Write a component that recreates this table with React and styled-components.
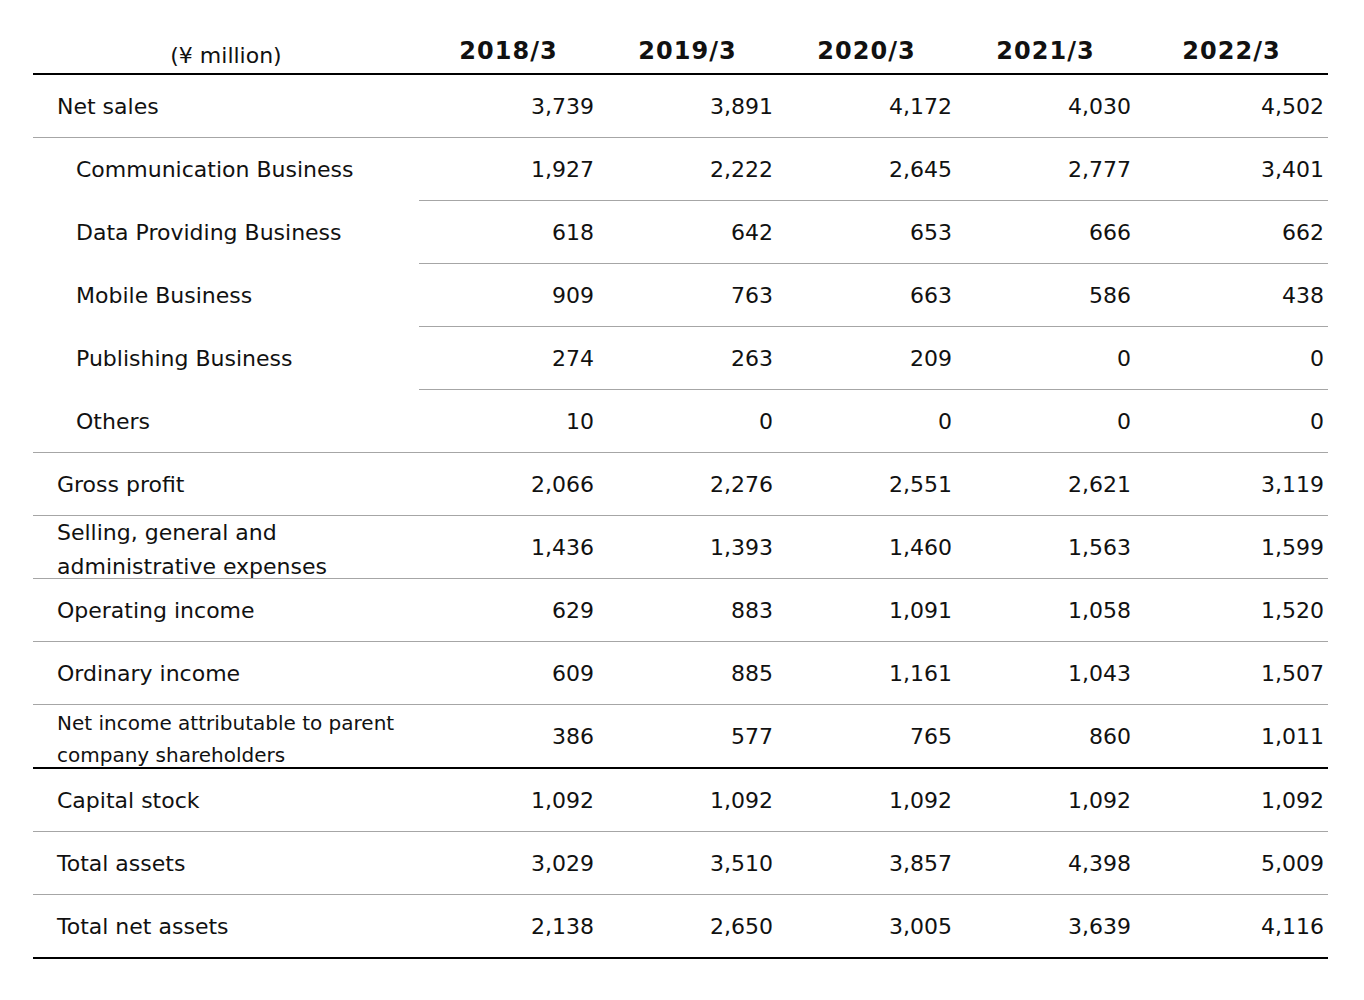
import React from "react";
import styled, { createGlobalStyle } from "styled-components";

const GlobalStyle = createGlobalStyle`
  body {
    margin: 0;
    background: #fff;
    font-family: Verdana, "DejaVu Sans", sans-serif;
    color: #111;
  }
`;

const Wrapper = styled.div`
  padding: 20px 36px 0 33px;
`;

const Table = styled.table`
  width: 1295px;
  border-collapse: collapse;
  table-layout: fixed;
  font-size: 22px;
  border-bottom: 2px solid #000;
`;

const HeadCell = styled.th`
  height: ${({ $unit }) => ($unit ? "35px" : "45px")};
  padding: ${({ $unit }) => ($unit ? "18px 0 0" : "8px 0 0")};
  text-align: center;
  vertical-align: middle;
  font-weight: ${({ $unit }) => ($unit ? "normal" : "bold")};
  font-size: ${({ $unit }) => ($unit ? "22px" : "24px")};
  letter-spacing: ${({ $unit }) => ($unit ? "0" : "1px")};
  border-bottom: 2px solid #000;
`;

const Row = styled.tr`
  height: 63px;
  border-bottom: ${({ $line }) =>
    $line === "strong" ? "2px solid #000" : $line === "none" ? "0" : "1px solid #a6a6a6"};
`;

const Label = styled.td`
  padding: 0 0 0 ${({ $sub }) => ($sub ? "43px" : "24px")};
  vertical-align: middle;
  white-space: nowrap;
`;

const LabelText = styled.div`
  box-sizing: border-box;
  height: 62px;
  display: flex;
  flex-direction: column;
  justify-content: center;
  padding-top: ${({ $multi }) => ($multi ? "5px" : "2px")};
  line-height: ${({ $small }) => ($small ? "32px" : "34px")};
  font-size: ${({ $small }) => ($small ? "20px" : "22px")};
`;

const Value = styled.td`
  padding: 0 4px 0 0;
  text-align: right;
  vertical-align: middle;
  border-bottom: ${({ $subLine }) => ($subLine ? "1px solid #a6a6a6" : "inherit")};
`;

const years = ["2018/3", "2019/3", "2020/3", "2021/3", "2022/3"];

const rows = [
  { label: "Net sales", values: ["3,739", "3,891", "4,172", "4,030", "4,502"] },
  { label: "Communication Business", sub: true, subLine: true, values: ["1,927", "2,222", "2,645", "2,777", "3,401"] },
  { label: "Data Providing Business", sub: true, subLine: true, values: ["618", "642", "653", "666", "662"] },
  { label: "Mobile Business", sub: true, subLine: true, values: ["909", "763", "663", "586", "438"] },
  { label: "Publishing Business", sub: true, subLine: true, values: ["274", "263", "209", "0", "0"] },
  { label: "Others", sub: true, values: ["10", "0", "0", "0", "0"] },
  { label: "Gross profit", values: ["2,066", "2,276", "2,551", "2,621", "3,119"] },
  { label: ["Selling, general and", "administrative expenses"], values: ["1,436", "1,393", "1,460", "1,563", "1,599"] },
  { label: "Operating income", values: ["629", "883", "1,091", "1,058", "1,520"] },
  { label: "Ordinary income", values: ["609", "885", "1,161", "1,043", "1,507"] },
  { label: ["Net income attributable to parent", "company shareholders"], small: true, line: "strong", values: ["386", "577", "765", "860", "1,011"] },
  { label: "Capital stock", values: ["1,092", "1,092", "1,092", "1,092", "1,092"] },
  { label: "Total assets", values: ["3,029", "3,510", "3,857", "4,398", "5,009"] },
  { label: "Total net assets", line: "none", values: ["2,138", "2,650", "3,005", "3,639", "4,116"] },
];

const colWidths = [386, 179, 179, 179, 179, 193];

export default function App() {
  return (
    <Wrapper>
      <GlobalStyle />
      <Table>
        <colgroup>
          {colWidths.map((w, i) => (
            <col key={i} style={{ width: w }} />
          ))}
        </colgroup>
        <thead>
          <tr>
            <HeadCell $unit>(¥ million)</HeadCell>
            {years.map((y) => (
              <HeadCell key={y}>{y}</HeadCell>
            ))}
          </tr>
        </thead>
        <tbody>
          {rows.map((r, i) => {
            const multi = Array.isArray(r.label);
            return (
              <Row key={i} $line={r.subLine ? "none" : r.line}>
                <Label $sub={r.sub}>
                  <LabelText $multi={multi} $small={r.small}>
                    {multi ? r.label.map((l, j) => <div key={j}>{l}</div>) : r.label}
                  </LabelText>
                </Label>
                {r.values.map((v, j) => (
                  <Value key={j} $subLine={r.subLine}>{v}</Value>
                ))}
              </Row>
            );
          })}
        </tbody>
      </Table>
    </Wrapper>
  );
}
